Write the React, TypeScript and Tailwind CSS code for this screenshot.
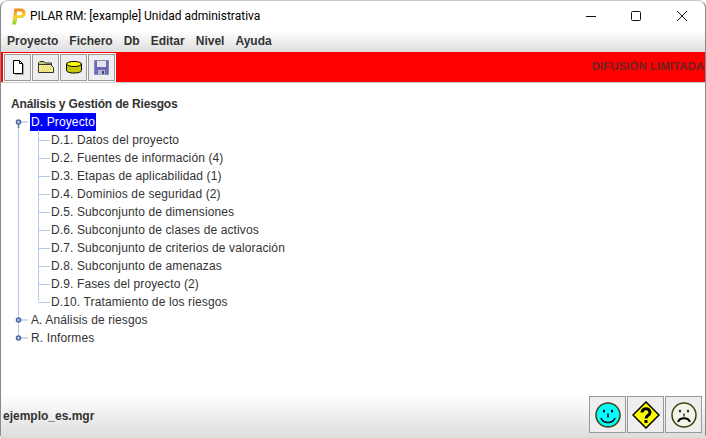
const children = [
  'D.1. Datos del proyecto',
  'D.2. Fuentes de información (4)',
  'D.3. Etapas de aplicabilidad (1)',
  'D.4. Dominios de seguridad (2)',
  'D.5. Subconjunto de dimensiones',
  'D.6. Subconjunto de clases de activos',
  'D.7. Subconjunto de criterios de valoración',
  'D.8. Subconjunto de amenazas',
  'D.9. Fases del proyecto (2)',
  'D.10. Tratamiento de los riesgos',
]

const menus = ['Proyecto', 'Fichero', 'Db', 'Editar', 'Nivel', 'Ayuda']

function Handle({ open }: { open?: boolean }) {
  return (
    <svg width="15" height="18" viewBox="0 0 15 18" className="relative shrink-0">
      <path d="M6 9h7" stroke="#9db6d8" strokeWidth="1" />
      {open && <path d="M3.5 11v4" stroke="#5f78b0" strokeWidth="1.5" />}
      <circle cx="3.5" cy="9" r="2" fill="#c4d0ec" stroke="#4f68a8" strokeWidth="1.6" />
    </svg>
  )
}

function ToolButton({ children }: { children: React.ReactNode }) {
  return (
    <div className="flex h-[27px] w-[27px] items-center justify-center border border-[#999999] bg-[#eeeeee]">
      {children}
    </div>
  )
}

function FaceButton({ children }: { children: React.ReactNode }) {
  return (
    <div className="flex h-[37px] w-[37px] items-center justify-center border border-[#999999] bg-[#eeeeee]">
      {children}
    </div>
  )
}

export default function App() {
  return (
    <div className="flex h-[438px] w-[706px] flex-col overflow-hidden rounded-t-lg rounded-b-[4px] border border-b-0 border-[#8a8a8a] border-t-[#c8c8c8] bg-white font-['Liberation_Sans',sans-serif] text-[12px] text-[#333333]">
      {/* Title bar */}
      <div className="flex h-[30px] items-center pl-[10px]">
        <svg width="15" height="17" viewBox="0 0 15 17">
          <defs>
            <linearGradient id="p" x1="0.2" y1="0" x2="0.4" y2="1">
              <stop offset="0" stopColor="#f07a20" />
              <stop offset="0.55" stopColor="#f7d428" />
              <stop offset="1" stopColor="#6edc48" />
            </linearGradient>
          </defs>
          <path d="M3.5 0.5h6.5a4.4 4.4 0 0 1 0 9.6H6.4L5 16.5H1z M6.2 3.4l-.7 3.8h3.8a1.9 1.9 0 0 0 0-3.8z" fill="url(#p)" fillRule="evenodd" />
        </svg>
        <span className="ml-[4px] font-['Roboto',sans-serif] text-[12px] text-black">PILAR RM: [example] Unidad administrativa</span>
        <div className="ml-auto flex items-center pr-[18px]">
          <svg width="10" height="10" viewBox="0 0 10 10" className="mr-[35px]">
            <path d="M0 5.5h10" stroke="#111" strokeWidth="1" />
          </svg>
          <svg width="10" height="10" viewBox="0 0 10 10" className="mr-[36px]">
            <rect x="0.5" y="0.5" width="9" height="9" rx="1" fill="none" stroke="#111" strokeWidth="1" />
          </svg>
          <svg width="10" height="10" viewBox="0 0 10 10">
            <path d="M0 0l10 10M10 0l-10 10" stroke="#111" strokeWidth="1" />
          </svg>
        </div>
      </div>

      {/* Menu */}
      <div className="flex h-[21px] items-center gap-[11px] bg-gradient-to-b from-white to-[#dddddd] pb-[2px] pl-[6px] font-bold">
        {menus.map((m) => (
          <span key={m}>{m}</span>
        ))}
      </div>

      {/* Toolbar */}
      <div className="flex h-[31px] items-center justify-between border-b border-[#cccccc] bg-[#ff0000] pl-[2px]">
        <div className="flex h-[29px] w-[113px] items-center gap-px bg-white pl-px">
          <ToolButton>
            <svg width="14" height="16" viewBox="0 0 14 16">
              <path d="M2.5 1.5h6l3 3v10h-9z" fill="#fff" stroke="#000" />
              <path d="M8.5 1.5v3h3" fill="none" stroke="#000" />
              <path d="M12.5 5v10.5H4" fill="none" stroke="#aaa" />
            </svg>
          </ToolButton>
          <ToolButton>
            <svg width="18" height="16" viewBox="0 0 18 16">
              <path d="M1.5 4l1.5-1.5h4L8.5 4h6v2h-13z" fill="#c8c878" stroke="#333" />
              <path d="M1.5 13.5v-8h12l3 3v5z" fill="#f4ec90" stroke="#333" />
              <path d="M4 8h10M5 10h10M4 12h10" stroke="#d8c860" strokeDasharray="1 1" />
            </svg>
          </ToolButton>
          <ToolButton>
            <svg width="18" height="14" viewBox="0 0 18 14">
              <path d="M1.5 4v6.5c0 1.5 3.5 2.5 7.5 2.5s7.5-1 7.5-2.5V4" fill="#c8c800" stroke="#000" />
              <ellipse cx="9" cy="4" rx="7.5" ry="2.5" fill="#ffff00" stroke="#000" />
            </svg>
          </ToolButton>
          <ToolButton>
            <svg width="15" height="15" viewBox="0 0 15 15">
              <path d="M0.5 0.5h14v14H0.5z" fill="#6a6ab8" stroke="#8888bb" />
              <path d="M3 1h9v6H3z" fill="#e4e4f0" />
              <path d="M4 10h7v4.5H4z" fill="#b8b8cc" />
              <path d="M8 11h2v3H8z" fill="#404080" />
            </svg>
          </ToolButton>
        </div>
        <span className="whitespace-nowrap pr-[1px] text-[11.5px] font-bold text-[#6e2222]">DIFUSIÓN LIMITADA</span>
      </div>

      {/* Tree */}
      <div className="relative flex-1 pl-[10px] pt-[12px] tracking-[0.12px]">
        <div className="h-[18px] font-bold leading-[18px] tracking-[-0.17px]">Análisis y Gestión de Riesgos</div>
        <div className="absolute left-[17px] top-[42px] h-[212px] w-px bg-[#b4cae6]" />
        <div className="absolute left-[37px] top-[47px] h-[171px] w-px bg-[#b4cae6]" />
        <div className="flex h-[18px] items-center pl-[4px]">
          <Handle open />
          <span className="bg-[#0000ff] px-[1px] leading-[18px] text-white">D. Proyecto</span>
        </div>
        {children.map((c) => (
          <div key={c} className="flex h-[18px] items-center pl-[9px]">
            <div className="ml-[18px] h-px w-[12px] bg-[#b4cae6]" />
            <span className="ml-[1px] leading-[18px]">{c}</span>
          </div>
        ))}
        <div className="flex h-[18px] items-center pl-[4px]">
          <Handle />
          <span className="px-[1px]">A. Análisis de riesgos</span>
        </div>
        <div className="flex h-[18px] items-center pl-[4px]">
          <Handle />
          <span className="px-[1px]">R. Informes</span>
        </div>
      </div>

      {/* Status bar */}
      <div className="flex h-[43px] items-start justify-between bg-gradient-to-b from-white to-[#dddddd] pl-[2px] pr-[3px] pt-[1px]">
        <span className="mt-[11px] font-bold">ejemplo_es.mgr</span>
        <div className="flex gap-px">
          <FaceButton>
            <svg width="26" height="26" viewBox="0 0 26 26">
              <circle cx="13" cy="13" r="12" fill="#00ffff" stroke="#404010" strokeWidth="1.5" />
              <ellipse cx="9" cy="9" rx="1.2" ry="1.6" fill="#000" />
              <ellipse cx="17" cy="9" rx="1.2" ry="1.6" fill="#000" />
              <path d="M13 11.5v4" stroke="#000" strokeWidth="1.5" />
              <path d="M6 16c2 6 12 6 14 0" fill="none" stroke="#000" strokeWidth="1.5" />
            </svg>
          </FaceButton>
          <FaceButton>
            <svg width="28" height="28" viewBox="0 0 28 28">
              <path d="M14 1l13 13-13 13L1 14z" fill="#ffff00" stroke="#000" strokeWidth="1.5" />
              <path d="M10 11.5c0-5 8-5 8 0 0 3-4 2.5-4 6" fill="none" stroke="#000" strokeWidth="3" />
              <path d="M12.5 19h3v3h-3z" fill="#000" />
            </svg>
          </FaceButton>
          <FaceButton>
            <svg width="26" height="26" viewBox="0 0 26 26">
              <circle cx="13" cy="13" r="12" fill="#f4f4ea" stroke="#404010" strokeWidth="1.5" />
              <ellipse cx="9" cy="9" rx="1.2" ry="1.6" fill="#333" />
              <ellipse cx="17" cy="9" rx="1.2" ry="1.6" fill="#333" />
              <path d="M13 11.5v3" stroke="#333" strokeWidth="1.5" />
              <path d="M7 20c2-5 10-5 12 0" fill="none" stroke="#000" strokeWidth="2" />
            </svg>
          </FaceButton>
        </div>
      </div>
    </div>
  )
}
